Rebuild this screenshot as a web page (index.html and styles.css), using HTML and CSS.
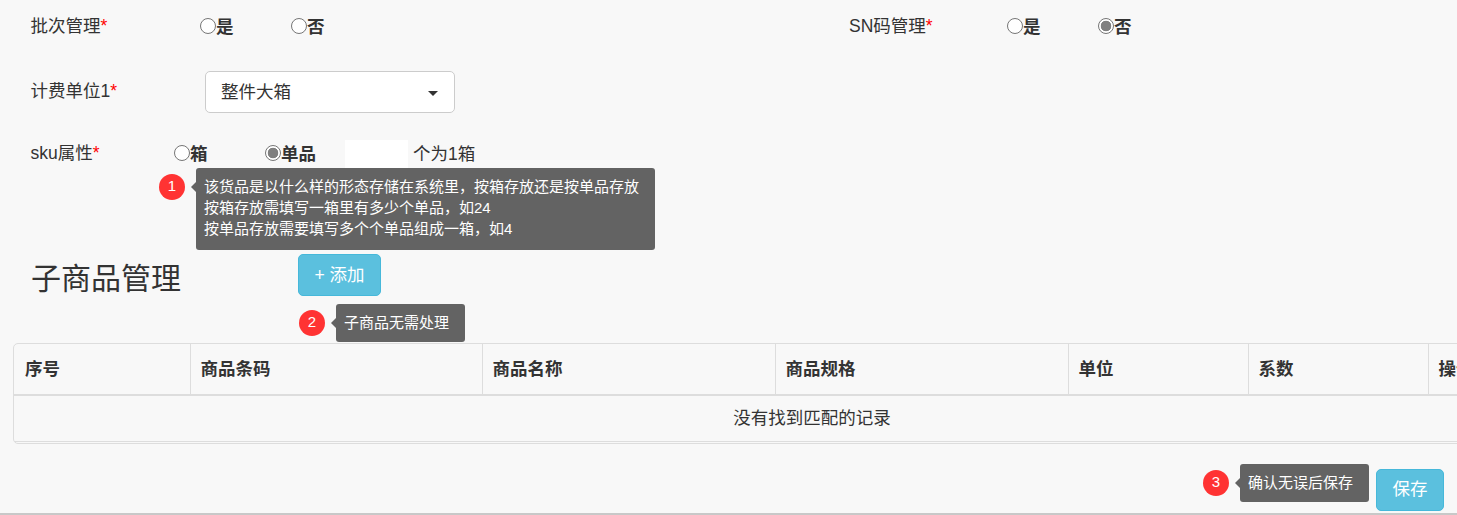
FILE: index.html
```html
<!DOCTYPE html>
<html lang="zh-CN">
<head>
<meta charset="utf-8">
<title>货品</title>
<link rel="stylesheet" href="styles.css">
</head>
<body>
<div class="page">
  <div class="row row-first">
    <div class="field field-wide">
      <span class="label label-a">批次管理<em>*</em></span>
      <label class="opt"><input type="radio" name="batch"><b>是</b></label>
      <label class="opt"><input type="radio" name="batch"><b>否</b></label>
    </div>
    <div class="field">
      <span class="label label-sn">SN码管理<em>*</em></span>
      <label class="opt"><input type="radio" name="sn"><b>是</b></label>
      <label class="opt"><input type="radio" name="sn" checked><b>否</b></label>
    </div>
  </div>

  <div class="row row-unit">
    <span class="label label-b">计费单位1<em>*</em></span>
    <div class="select">整件大箱<i class="caret"></i></div>
  </div>

  <div class="row row-sku">
    <span class="label label-c">sku属性<em>*</em></span>
    <label class="opt"><input type="radio" name="sku"><b>箱</b></label>
    <label class="opt opt-short"><input type="radio" name="sku" checked><b>单品</b></label>
    <input class="qty" type="text">
    <span class="qty-text">个为1箱</span>
  </div>

  <div class="row row-head">
    <h2 class="title">子商品管理</h2>
    <button class="btn btn-add">+ 添加</button>
  </div>

  <div class="table-box">
    <table class="table">
      <colgroup>
        <col class="c1"><col class="c2"><col class="c3"><col class="c4"><col class="c5"><col class="c6"><col class="c7">
      </colgroup>
      <thead>
        <tr><th>序号</th><th>商品条码</th><th>商品名称</th><th>商品规格</th><th>单位</th><th>系数</th><th>操作</th></tr>
      </thead>
      <tbody>
        <tr><td colspan="7">没有找到匹配的记录</td></tr>
      </tbody>
    </table>
  </div>

  <div class="footer">
    <button class="btn btn-save">保存</button>
  </div>

  <div class="tip tip-1">
    <span class="badge">1</span>
    <div class="bubble bubble-tall">该货品是以什么样的形态存储在系统里，按箱存放还是按单品存放<br>按箱存放需填写一箱里有多少个单品，如24<br>按单品存放需要填写多个个单品组成一箱，如4</div>
  </div>
  <div class="tip tip-2">
    <span class="badge">2</span>
    <div class="bubble">子商品无需处理</div>
  </div>
  <div class="tip tip-3">
    <span class="badge">3</span>
    <div class="bubble">确认无误后保存</div>
  </div>
</div>
</body>
</html>
```

FILE: styles.css
```css
* { box-sizing: border-box; }
html, body { margin: 0; padding: 0; }
body {
  background: #f8f8f8;
  color: #333;
  font-family: "Liberation Sans", "Noto Sans CJK SC", sans-serif;
  font-size: 17.5px;
  line-height: 25px;
}
.page {
  position: relative;
  width: 1457px;
  height: 515px;
  overflow: hidden;
  border-bottom: 2px solid #c8c8c8;
}
.row { display: flex; align-items: center; }
.row-first { height: 54px; padding-left: 30.5px; }
.field { display: flex; align-items: center; }
.field-wide { flex: 0 0 818.5px; }
.row-unit { height: 42px; margin-top: 17px; padding-left: 30.5px; }
.row-sku { height: 28px; margin-top: 27px; padding-left: 30.5px; }
.row-head { height: 42px; margin-top: 86px; padding-left: 31px; }

.label { display: block; margin-top: -1px; }
.label em { color: #f00; font-style: normal; }
.label-a { flex: 0 0 169.5px; }
.label-sn { flex: 0 0 158px; }
.label-b { flex: 0 0 174.5px; }
.label-c { flex: 0 0 143.5px; }

.opt { display: flex; align-items: center; flex: 0 0 91px; }
.opt-short { flex-basis: 80px; }
.opt b { font-weight: 700; }
.opt input {
  appearance: none;
  width: 16px;
  height: 16px;
  margin: -3px 0 0;
  border: 1px solid #767676;
  border-radius: 50%;
  background: #fff;
}
.opt input:checked {
  background: radial-gradient(circle, #808080 0 5px, #fff 5.6px);
}

.select {
  position: relative;
  width: 250px;
  height: 42px;
  padding: 8px 15px;
  background: #fff;
  border: 1px solid #ccc;
  border-radius: 5px;
}
.caret {
  position: absolute;
  right: 16px;
  top: 19px;
  border-top: 5px solid #333;
  border-left: 5px solid transparent;
  border-right: 5px solid transparent;
}
.qty {
  width: 63px;
  height: 28px;
  margin: 0;
  padding: 0;
  border: 0;
  background: #fff;
}
.qty-text { margin-left: 5px; }

.title {
  flex: 0 0 267px;
  margin: 7px 0 0;
  font-size: 30px;
  line-height: 40px;
  font-weight: 400;
}
.btn {
  display: block;
  height: 42px;
  padding: 0;
  color: #fff;
  font: inherit;
  background: #5bc0de;
  border: 1px solid #46b8da;
  border-radius: 5px;
}
.btn-add { width: 83px; }
.btn-save { width: 68px; }

.table-box {
  width: 1598px;
  margin: 47px 0 0 13px;
  padding-bottom: 1px;
  border: 1px solid #ddd;
  border-radius: 5px;
  overflow: hidden;
}
.table { width: 100%; table-layout: fixed; border-collapse: collapse; }
.c1 { width: 176px; }
.c2 { width: 292px; }
.c3, .c4 { width: 293px; }
.c5, .c6 { width: 180px; }
.table th {
  height: 51px;
  padding: 0 10px;
  text-align: left;
  font-weight: 700;
  border-left: 1px solid #ddd;
  border-bottom: 2px solid #ddd;
}
.table th:first-child { border-left: 0; padding-left: 11px; }
.table td {
  height: 46px;
  text-align: center;
  border-bottom: 1px solid #ddd;
}

.footer {
  display: flex;
  justify-content: flex-end;
  margin-top: 25px;
  padding-right: 13px;
}

.tip { position: absolute; display: flex; align-items: center; }
.tip-1 { left: 159px; top: 168px; }
.tip-2 { left: 299px; top: 304px; }
.tip-3 { left: 1203px; top: 464px; }
.badge {
  flex: none;
  width: 26px;
  height: 26px;
  border-radius: 50%;
  background: #ff3333;
  color: #fff;
  font-size: 15px;
  line-height: 24px;
  text-align: center;
}
.tip-1 .badge { align-self: flex-start; margin-top: 6px; }
.bubble {
  position: relative;
  margin-left: 11px;
  padding: 8px 16px 9px 8px;
  background: #636363;
  color: #fff;
  font-size: 15px;
  line-height: 21px;
  white-space: nowrap;
  border-radius: 3px;
}
.bubble::before {
  content: "";
  position: absolute;
  left: -5px;
  top: 14px;
  border-top: 5px solid transparent;
  border-bottom: 5px solid transparent;
  border-right: 5px solid #636363;
}
.bubble-tall { padding-bottom: 11px; }
```
